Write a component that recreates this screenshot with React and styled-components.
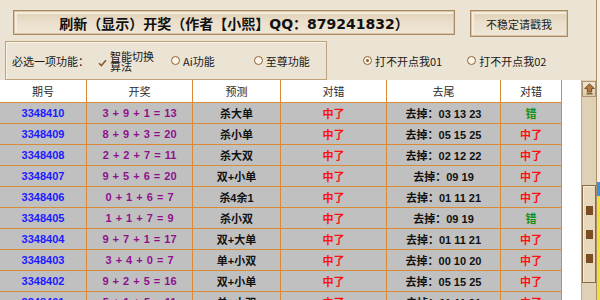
import React from 'react'
import styled, { createGlobalStyle, css } from 'styled-components'

const GlobalStyle = createGlobalStyle`
  html, body {
    margin: 0;
    padding: 0;
    overflow: hidden;
    background: #ebe3d3;
  }
  * { box-sizing: border-box; }
`

const cjk = `"Noto Sans CJK SC", sans-serif`
const line = '#d98a35'

const Screen = styled.div`
  display: flex;
  width: 600px;
  height: 300px;
  overflow: hidden;
`

const Main = styled.div`
  width: 597px;
  display: flex;
  flex-direction: column;
  background: #ebe3d3;
  border-right: 1px solid #a98c64;
`

const Desktop = styled.div`
  flex: 1;
  background: linear-gradient(180deg, #f3eee4 0, #f3eee4 182px, #3d8fe0 182px, #3d8fe0 196px, #f0df3a 196px);
`

const Top = styled.div`
  height: 80px;
  padding-top: 10px;
  display: flex;
  flex-direction: column;
  gap: 5px;
  font-family: ${cjk};
  font-size: 11px;
  color: #1a1a1a;
`

const ButtonRow = styled.div`
  display: flex;
  align-items: flex-start;
  gap: 15px;
  padding-left: 13px;
  height: 26px;
`

const bevel = css`
  border: 1px solid #a88a62;
  box-shadow: inset 0 0 0 1px #d9c6a6, inset 1px 1px 0 2px #f4ecde;
  background: linear-gradient(180deg, #e0cfb3 0%, #eadfcb 45%, #efe6d6 100%);
  display: flex;
  align-items: center;
  justify-content: center;
`

const TitleButton = styled.div`
  ${bevel}
  width: 442px;
  height: 25px;
  font-family: "DejaVu Sans", ${cjk};
  font-weight: bold;
  font-size: 14px;
  color: #111;
`

const SideButton = styled.div`
  ${bevel}
  width: 98px;
  height: 27px;
  font-size: 11px;
  color: #222;
`

const OptionRow = styled.div`
  display: flex;
  align-items: center;
  height: 39px;
`

const GroupBox = styled.div`
  margin-left: 5px;
  width: 322px;
  height: 39px;
  border: 1px solid #bfa27a;
  box-shadow: inset 1px 1px 0 #faf3e6;
  display: flex;
  align-items: center;
  padding-left: 6px;
`

const Label = styled.span`
  white-space: nowrap;
`

const Option = styled.label`
  display: flex;
  align-items: center;
  gap: 3px;
  margin-left: ${p => p.$offset}px;
  white-space: nowrap;
`

const Wrapped = styled.span`
  width: 44px;
  white-space: normal;
  line-height: 10px;
  margin-top: 1px;
`

const Radio = styled.span`
  width: 9px;
  height: 9px;
  border-radius: 50%;
  border: 1.5px solid #8f5f2f;
  background: #fbf5ea;
  position: relative;
  flex: none;

  ${p => p.$on && css`
    &::after {
      content: '';
      position: absolute;
      left: 1.5px;
      top: 1.5px;
      width: 3px;
      height: 3px;
      border-radius: 50%;
      background: #8a5a2a;
    }
  `}
`

const Check = () => (
  <svg width="9" height="8" viewBox="0 0 9 8" style={{ marginTop: 4 }}>
    <path d="M1 4.2 L3.4 6.6 L8 1.2" fill="none" stroke="#8a5a2a" strokeWidth="1.6" />
  </svg>
)

const Body = styled.div`
  flex: 1;
  display: flex;
  min-height: 0;
`

const TableArea = styled.div`
  width: 581px;
  background: #fff;
  overflow: hidden;
`

const Grid = styled.div`
  display: grid;
  grid-template-columns: 87px 106px 88px 106px 114px 61px;
  width: 562px;
  height: ${p => (p.$head ? 23 : 21)}px;
  background: ${p => (p.$head ? '#fff' : '#c0c0c0')};
  border-bottom: 1px solid ${line};
`

const tones = {
  blue: '#1c1cff',
  purple: '#8e108e',
  black: '#111',
  red: '#ff1010',
  green: '#15901a'
}

const Cell = styled.div`
  display: flex;
  align-items: center;
  justify-content: center;
  border-right: 1px solid ${line};
  font-family: "Liberation Sans", ${cjk};
  font-size: 11px;
  font-weight: ${p => (p.$head ? 'normal' : 'bold')};
  color: ${p => (p.$head ? '#2a2a2a' : tones[p.$tone])};
  word-spacing: ${p => (p.$tone === 'purple' ? 1 : 0)}px;
  white-space: pre;
`

const Scrollbar = styled.div`
  width: 15px;
  display: flex;
  flex-direction: column;
  background: #dfd1b5;
  border-left: 1px solid #c4aa84;
`

const ArrowButton = styled.div`
  height: 16px;
  margin-top: 1px;
  border: 1px solid #b09070;
  background: linear-gradient(180deg, #f0e6d4, #dccaa8);
  display: flex;
  align-items: center;
  justify-content: center;
`

const Thumb = styled.div`
  margin-top: 88px;
  height: 98px;
  border: 1px solid #8a6a45;
  box-shadow: inset 1px 1px 0 #f6eddc;
  background: #e6d8bd;
  display: flex;
  flex-direction: column;
  align-items: center;
  justify-content: space-around;
  padding: 12px 0;
`

const Grip = styled.span`
  width: 7px;
  height: 9px;
  background: #7a4e20;
`

const rows = [
  ['3348410', '3 + 9 + 1 = 13', '杀大单', '中了', '去掉：03 13 23', '错'],
  ['3348409', '8 + 9 + 3 = 20', '杀小单', '中了', '去掉：05 15 25', '中了'],
  ['3348408', '2 + 2 + 7 = 11', '杀大双', '中了', '去掉：02 12 22', '中了'],
  ['3348407', '9 + 5 + 6 = 20', '双+小单', '中了', '去掉：09 19', '中了'],
  ['3348406', '0 + 1 + 6 = 7', '杀4余1', '中了', '去掉：01 11 21', '中了'],
  ['3348405', '1 + 1 + 7 = 9', '杀小双', '中了', '去掉：09 19', '错'],
  ['3348404', '9 + 7 + 1 = 17', '双+大单', '中了', '去掉：01 11 21', '中了'],
  ['3348403', '3 + 4 + 0 = 7', '单+小双', '中了', '去掉：00 10 20', '中了'],
  ['3348402', '9 + 2 + 5 = 16', '双+小单', '中了', '去掉：05 15 25', '中了'],
  ['3348401', '5 + 1 + 5 = 11', '单+小双', '中了', '去掉：01 11 21', '中了']
]

const heads = ['期号', '开奖', '预测', '对错', '去尾', '对错']
const baseTones = ['blue', 'purple', 'black', 'red', 'black']

const App = () => (
  <Screen>
    <GlobalStyle />
    <Main>
      <Top>
        <ButtonRow>
          <TitleButton>刷新（显示）开奖（作者【小熙】QQ：879241832）</TitleButton>
          <SideButton>不稳定请戳我</SideButton>
        </ButtonRow>
        <OptionRow>
          <GroupBox>
            <Label>必选一项功能：</Label>
            <Option $offset={9}>
              <Check />
              <Wrapped>智能切换算法</Wrapped>
            </Option>
            <Option $offset={17}>
              <Radio />
              Ai功能
            </Option>
            <Option $offset={39}>
              <Radio />
              至尊功能
            </Option>
          </GroupBox>
          <Option $offset={36}>
            <Radio $on />
            打不开点我01
          </Option>
          <Option $offset={25}>
            <Radio />
            打不开点我02
          </Option>
        </OptionRow>
      </Top>
      <Body>
        <TableArea>
          <Grid $head>
            {heads.map((h, i) => (
              <Cell key={i} $head>{h}</Cell>
            ))}
          </Grid>
          {rows.map(r => (
            <Grid key={r[0]}>
              {r.map((v, i) => (
                <Cell key={i} $tone={i === 5 ? (v === '错' ? 'green' : 'red') : baseTones[i]}>
                  {v}
                </Cell>
              ))}
            </Grid>
          ))}
        </TableArea>
        <Scrollbar>
          <ArrowButton>
            <svg width="11" height="12" viewBox="0 0 11 12">
              <path d="M5.5 0.8 L10.3 5.6 L7.6 5.6 L7.6 9 L3.4 9 L3.4 5.6 L0.7 5.6 Z" fill="#b07a40" stroke="#6b4420" strokeWidth="0.9" />
              <path d="M2.5 10.8 H8.5" stroke="#6b4420" strokeWidth="1.2" />
            </svg>
          </ArrowButton>
          <Thumb>
            <Grip />
            <Grip />
            <Grip />
          </Thumb>
        </Scrollbar>
      </Body>
    </Main>
    <Desktop />
  </Screen>
)

export default App
